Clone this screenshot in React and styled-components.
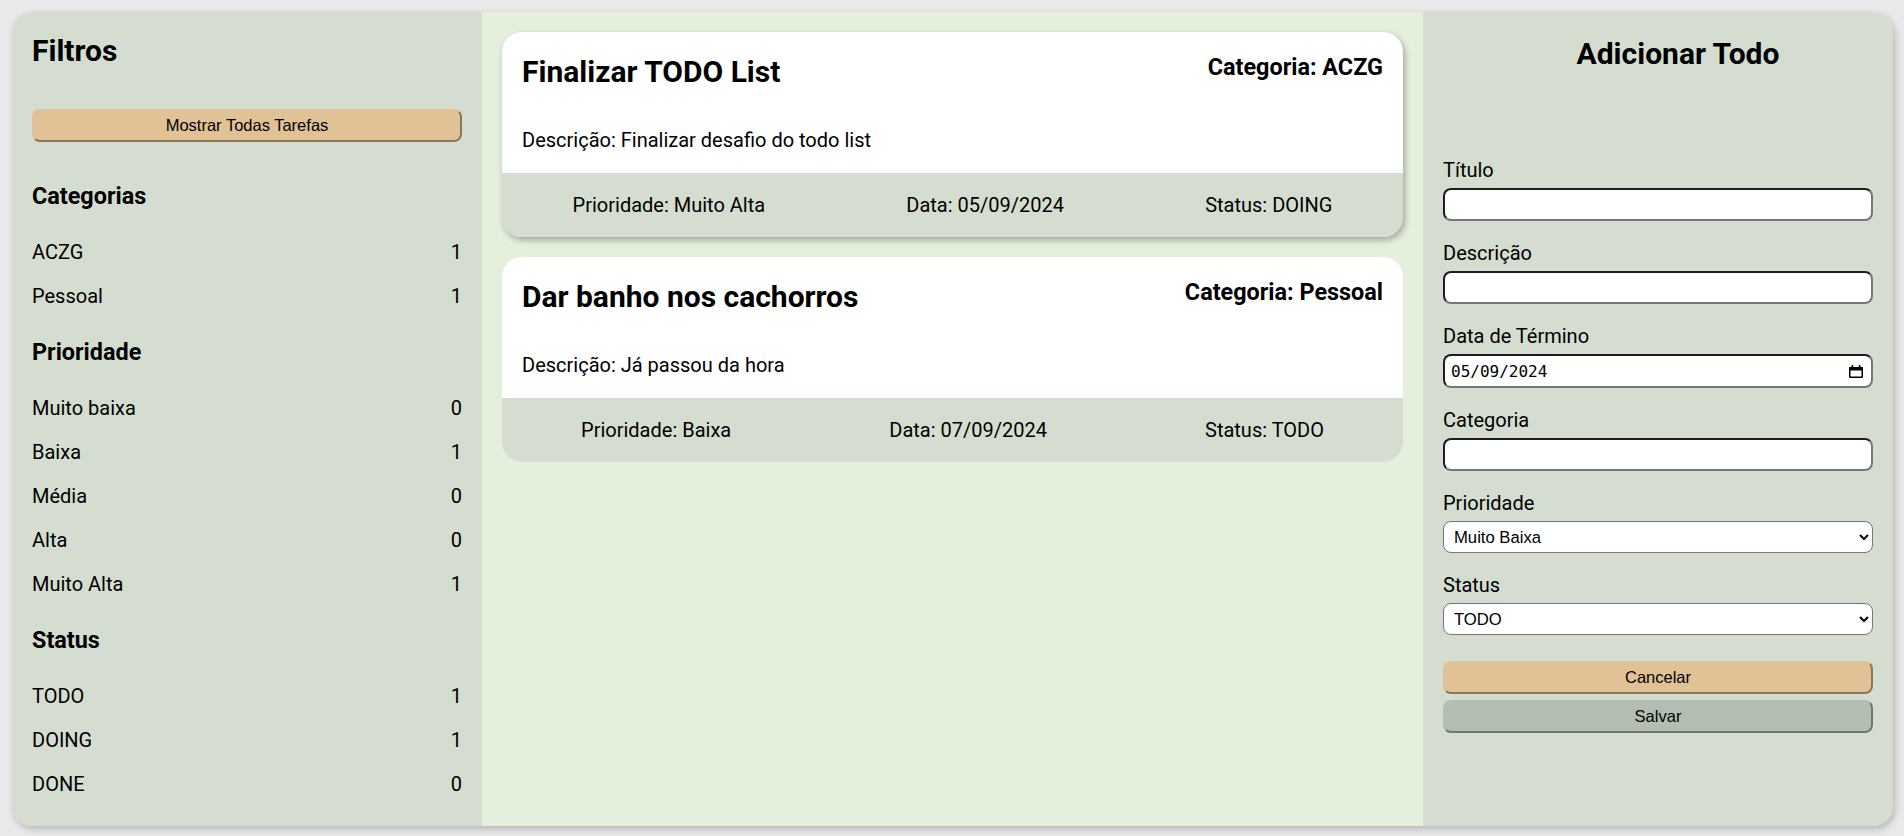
import React from 'react';
import styled, { createGlobalStyle } from 'styled-components';

const GlobalStyle = createGlobalStyle`
  html, body { margin: 0; padding: 0; background: #e9e9e9; overflow: hidden; }
  body { font-family: Roboto, "Noto Sans", Arial, sans-serif; color: #000; }
  *, *::before, *::after { box-sizing: border-box; }
`;

const SIDE = '#d5ddd0';

const Page = styled.div`
  padding: 12px 11px 10px 12px;
  height: 836px;
`;

const Board = styled.main`
  display: grid;
  grid-template-columns: 470px 1fr 470px;
  height: 814px;
  border-radius: 20px;
  overflow: hidden;
  box-shadow: 2px 3px 7px rgba(0, 0, 0, 0.22);
`;

const Sidebar = styled.aside`
  background: ${SIDE};
  padding: 20px;
  display: flex;
  flex-direction: column;
`;

const PanelTitle = styled.h1`
  margin: ${p => (p.$center ? '4px 0 0' : '1px 0 0')};
  padding-left: ${p => (p.$center ? '40px' : '0')};
  text-align: ${p => (p.$center ? 'center' : 'left')};
  font-size: 30px;
  line-height: 35px;
  font-weight: 700;
`;

const ActionButton = styled.button`
  display: block;
  width: 100%;
  height: 33px;
  margin: ${p => p.$margin || '0'};
  padding: 0;
  font-family: "Liberation Sans", Arial, sans-serif;
  font-size: 16.5px;
  color: #000;
  cursor: pointer;
  background: ${p => (p.$tone === 'sage' ? '#b3bdb1' : '#e0c296')};
  border: 2px solid;
  border-color: ${p =>
    p.$tone === 'sage'
      ? '#b3bdb1 #6f766d #6f766d #b3bdb1'
      : '#e0c296 #8b7658 #8b7658 #e0c296'};
  border-radius: 8px;
`;

const Section = styled.section`
  margin-top: ${p => (p.$first ? '41px' : '20.5px')};
`;

const SectionTitle = styled.h2`
  margin: 0 0 20.5px;
  font-size: 23.4px;
  line-height: 27px;
  font-weight: 700;
`;

const CountRow = styled.div`
  display: flex;
  justify-content: space-between;
  align-items: center;
  height: 44px;
  font-size: 20px;
  line-height: 23px;
`;

const TaskArea = styled.section`
  background: #e4efdc;
  padding: 20px;
  display: flex;
  flex-direction: column;
  gap: 20px;
`;

const Card = styled.article`
  background: #fff;
  border-radius: 20px;
  overflow: hidden;
  box-shadow: ${p => (p.$raised ? '2px 3px 6px rgba(0, 0, 0, 0.3)' : 'none')};
`;

const CardBody = styled.div`
  padding: 22px 20px 21px;
`;

const CardHead = styled.div`
  display: flex;
  justify-content: space-between;
  align-items: flex-start;
`;

const CardTitle = styled.h2`
  margin: 0;
  font-size: 30px;
  line-height: 35px;
  font-weight: 700;
`;

const CardCategory = styled.h3`
  margin: 0;
  font-size: 23.4px;
  line-height: 27px;
  font-weight: 700;
`;

const CardDesc = styled.p`
  margin: 40px 0 0;
  font-size: 20px;
  line-height: 23px;
`;

const CardFooter = styled.div`
  display: flex;
  justify-content: space-around;
  align-items: center;
  height: 64px;
  background: ${SIDE};
  font-size: 20px;
  line-height: 23px;
`;

const FormPanel = styled.aside`
  background: ${SIDE};
  padding: 20px;
`;

const Form = styled.form`
  margin-top: 88px;
  display: flex;
  flex-direction: column;
`;

const Field = styled.div`
  display: flex;
  flex-direction: column;
  margin-bottom: 21px;
`;

const Label = styled.label`
  font-size: 20px;
  line-height: 23px;
  margin-bottom: 6px;
`;

const boxBorder = `
  border: 2px solid;
  border-color: #1e1e1e #767676 #767676 #1e1e1e;
  border-radius: 8px;
  background: #fff;
`;

const TextInput = styled.input`
  ${boxBorder}
  width: 100%;
  height: 33px;
  padding: 0 6px;
  font: 16px "DejaVu Sans Mono", monospace;
  outline: none;
`;

const DateBox = styled.div`
  ${boxBorder}
  display: flex;
  align-items: center;
  height: 34px;
  padding: 0 8px 0 6px;
`;

const DateText = styled.input`
  flex: 1;
  min-width: 0;
  border: none;
  background: transparent;
  padding: 0;
  font: 16px "DejaVu Sans Mono", monospace;
  color: #000;
  outline: none;
`;

const Select = styled.select`
  width: 100%;
  height: 32px;
  border: 1px solid #767676;
  border-radius: 8px;
  background: #fff;
  padding: 0 6px;
  font-family: "Liberation Sans", Arial, sans-serif;
  font-size: 16.67px;
  color: #000;
`;

const Buttons = styled.div`
  display: flex;
  flex-direction: column;
  gap: 6px;
  margin-top: 5px;
`;

const CalendarIcon = () => (
  <svg width="14" height="13" viewBox="0 0 14 13" aria-hidden="true">
    <rect x="0.75" y="2.75" width="12.5" height="9.5" fill="none" stroke="#000" strokeWidth="1.5" rx="0.6" />
    <rect x="0" y="2" width="14" height="3.5" fill="#000" rx="0.6" />
    <rect x="2.6" y="0" width="1.6" height="3" fill="#000" />
    <rect x="9.8" y="0" width="1.6" height="3" fill="#000" />
  </svg>
);

const filters = [
  { title: 'Categorias', rows: [['ACZG', 1], ['Pessoal', 1]] },
  {
    title: 'Prioridade',
    rows: [['Muito baixa', 0], ['Baixa', 1], ['Média', 0], ['Alta', 0], ['Muito Alta', 1]],
  },
  { title: 'Status', rows: [['TODO', 1], ['DOING', 1], ['DONE', 0]] },
];

const tasks = [
  {
    title: 'Finalizar TODO List',
    category: 'ACZG',
    desc: 'Finalizar desafio do todo list',
    priority: 'Muito Alta',
    date: '05/09/2024',
    status: 'DOING',
    raised: true,
  },
  {
    title: 'Dar banho nos cachorros',
    category: 'Pessoal',
    desc: 'Já passou da hora',
    priority: 'Baixa',
    date: '07/09/2024',
    status: 'TODO',
    raised: false,
  },
];

export default function App() {
  return (
    <>
      <GlobalStyle />
      <Page>
        <Board>
          <Sidebar>
            <PanelTitle>Filtros</PanelTitle>
            <ActionButton type="button" $margin="41px 0 0">Mostrar Todas Tarefas</ActionButton>
            {filters.map((f, i) => (
              <Section key={f.title} $first={i === 0}>
                <SectionTitle>{f.title}</SectionTitle>
                {f.rows.map(([name, n]) => (
                  <CountRow key={name}>
                    <span>{name}</span>
                    <span>{n}</span>
                  </CountRow>
                ))}
              </Section>
            ))}
          </Sidebar>

          <TaskArea>
            {tasks.map(t => (
              <Card key={t.title} $raised={t.raised}>
                <CardBody>
                  <CardHead>
                    <CardTitle>{t.title}</CardTitle>
                    <CardCategory>Categoria: {t.category}</CardCategory>
                  </CardHead>
                  <CardDesc>Descrição: {t.desc}</CardDesc>
                </CardBody>
                <CardFooter>
                  <span>Prioridade: {t.priority}</span>
                  <span>Data: {t.date}</span>
                  <span>Status: {t.status}</span>
                </CardFooter>
              </Card>
            ))}
          </TaskArea>

          <FormPanel>
            <PanelTitle $center>Adicionar Todo</PanelTitle>
            <Form onSubmit={e => e.preventDefault()}>
              <Field>
                <Label htmlFor="titulo">Título</Label>
                <TextInput id="titulo" type="text" />
              </Field>
              <Field>
                <Label htmlFor="descricao">Descrição</Label>
                <TextInput id="descricao" type="text" />
              </Field>
              <Field>
                <Label htmlFor="data">Data de Término</Label>
                <DateBox>
                  <DateText id="data" type="text" defaultValue="05/09/2024" />
                  <CalendarIcon />
                </DateBox>
              </Field>
              <Field>
                <Label htmlFor="categoria">Categoria</Label>
                <TextInput id="categoria" type="text" />
              </Field>
              <Field>
                <Label htmlFor="prioridade">Prioridade</Label>
                <Select id="prioridade" defaultValue="Muito Baixa">
                  <option>Muito Baixa</option>
                  <option>Baixa</option>
                  <option>Média</option>
                  <option>Alta</option>
                  <option>Muito Alta</option>
                </Select>
              </Field>
              <Field>
                <Label htmlFor="status">Status</Label>
                <Select id="status" defaultValue="TODO">
                  <option>TODO</option>
                  <option>DOING</option>
                  <option>DONE</option>
                </Select>
              </Field>
              <Buttons>
                <ActionButton type="button">Cancelar</ActionButton>
                <ActionButton type="submit" $tone="sage">Salvar</ActionButton>
              </Buttons>
            </Form>
          </FormPanel>
        </Board>
      </Page>
    </>
  );
}
